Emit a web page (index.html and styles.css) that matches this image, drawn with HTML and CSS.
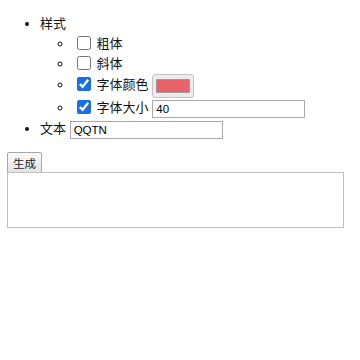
FILE: index.html
```html
<!DOCTYPE html>
<html>
<head>
<meta charset="utf-8">
<link rel="stylesheet" href="styles.css">
</head>
<body>
<ul class="list">
  <li class="item">样式
    <ul class="sub">
      <li class="item"><label><input class="check" type="checkbox"> 粗体</label></li>
      <li class="item"><label><input class="check" type="checkbox"> 斜体</label></li>
      <li class="item row-color"><label><input class="check" type="checkbox" checked> 字体颜色</label> <input class="color" type="color" value="#e8636a"></li>
      <li class="item"><label><input class="check" type="checkbox" checked> 字体大小</label> <input class="field" type="text" value="40"></li>
    </ul>
  </li>
  <li class="item row-text">文本 <input class="field" type="text" value="QQTN"></li>
</ul>
<button class="btn">生成</button>
<textarea class="out"></textarea>
</body>
</html>
```

FILE: styles.css
```css
body {
  margin: 7px;
  font-family: "Liberation Sans", "Noto Sans CJK SC", sans-serif;
  font-size: 13px;
  line-height: 20px;
  color: #111;
  background: #fff;
}
.list {
  margin: 7px 0 12px;
  padding-left: 33px;
  list-style: disc;
}
.sub {
  margin: 0;
  padding-left: 33px;
  list-style: circle;
}
.item {
  line-height: 20px;
}
.check {
  width: 14px;
  height: 14px;
  margin: 0 2px 0 4px;
  vertical-align: -2px;
  accent-color: #1a6fe6;
}
.color {
  box-sizing: border-box;
  width: 42px;
  height: 24px;
  padding: 0;
  margin: 0;
  border: 1px solid #c4c4c4;
  border-radius: 3px;
  background: #ececec;
  vertical-align: middle;
}
.color::-webkit-color-swatch-wrapper {
  padding: 4px 3px;
}
.color::-webkit-color-swatch {
  border: 1px solid #9a9a9a;
  border-radius: 1px;
}
.row-color {
  line-height: 22px;
}
.field {
  box-sizing: border-box;
  width: 153px;
  height: 18px;
  margin: 0;
  padding: 0 3px;
  border: 1px solid #a9a9a9;
  font-family: "Liberation Sans", "Noto Sans CJK SC", sans-serif;
  font-size: 11.5px;
  color: #000;
  vertical-align: middle;
}
.row-text {
  line-height: 22px;
}
.btn {
  display: block;
  box-sizing: border-box;
  width: 35px;
  height: 21px;
  margin: 0;
  padding: 0;
  border: 1px solid #a6a6a6;
  border-radius: 2px;
  background: linear-gradient(#fbfbfb, #e4e4e4);
  font-family: "Noto Sans CJK SC", sans-serif;
  font-size: 11.5px;
  color: #222;
}
.out {
  display: block;
  box-sizing: border-box;
  width: 337px;
  height: 56px;
  margin: -1px 0 0;
  border: 1px solid #c2c2c2;
  resize: none;
  background: #fff;
}
```
